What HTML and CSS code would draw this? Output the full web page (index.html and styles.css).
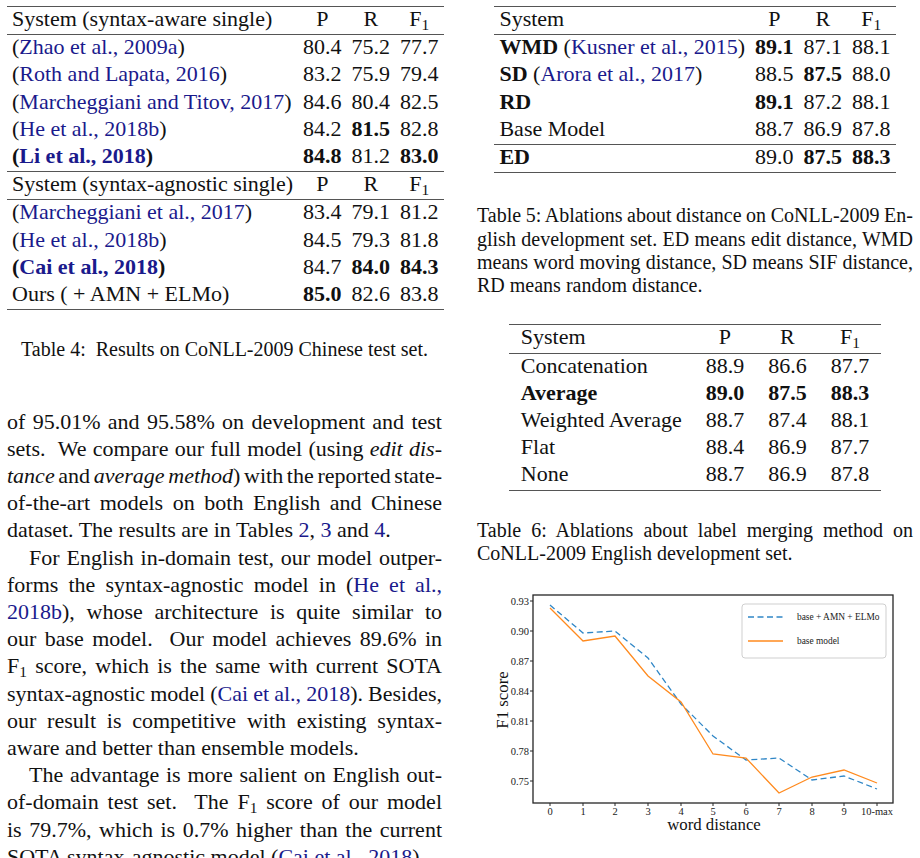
FILE: index.html
```html
<!DOCTYPE html>
<html lang="en">
<head>
  <meta charset="UTF-8">
  <title>Ablations and results</title>
  <link rel="stylesheet" href="styles.css">
</head>
<body>
  <div class="page">

    <!-- Left column -->
    <div class="col">
      <table class="tbl t4">
        <tr class="hd">
          <td class="name">System (syntax-aware single)</td>
          <td>P</td><td>R</td><td>F<sub>1</sub></td>
        </tr>
        <tr><td class="name">(<span class="cite">Zhao et al., 2009a</span>)</td><td>80.4</td><td>75.2</td><td>77.7</td></tr>
        <tr><td class="name">(<span class="cite">Roth and Lapata, 2016</span>)</td><td>83.2</td><td>75.9</td><td>79.4</td></tr>
        <tr><td class="name">(<span class="cite">Marcheggiani and Titov, 2017</span>)</td><td>84.6</td><td>80.4</td><td>82.5</td></tr>
        <tr><td class="name">(<span class="cite">He et al., 2018b</span>)</td><td>84.2</td><td><b>81.5</b></td><td>82.8</td></tr>
        <tr class="last"><td class="name"><b>(<span class="cite">Li et al., 2018</span>)</b></td><td><b>84.8</b></td><td>81.2</td><td><b>83.0</b></td></tr>
        <tr class="hd">
          <td class="name">System (syntax-agnostic single)</td>
          <td>P</td><td>R</td><td>F<sub>1</sub></td>
        </tr>
        <tr><td class="name">(<span class="cite">Marcheggiani et al., 2017</span>)</td><td>83.4</td><td>79.1</td><td>81.2</td></tr>
        <tr><td class="name">(<span class="cite">He et al., 2018b</span>)</td><td>84.5</td><td>79.3</td><td>81.8</td></tr>
        <tr><td class="name"><b>(<span class="cite">Cai et al., 2018</span>)</b></td><td>84.7</td><td><b>84.0</b></td><td><b>84.3</b></td></tr>
        <tr><td class="name">Ours ( + AMN + ELMo)</td><td><b>85.0</b></td><td>82.6</td><td>83.8</td></tr>
      </table>
      <p class="caption c4">Table 4:&nbsp; Results on CoNLL-2009 Chinese test set.</p>

      <div class="body">
        <span class="ln">of 95.01% and 95.58% on development and test</span>
        <span class="ln">sets.&nbsp; We compare our full model (using <i>edit dis-</i></span>
        <span class="ln"><i>tance</i> and <i>average method</i>) with the reported state-</span>
        <span class="ln">of-the-art models on both English and Chinese</span>
        <span class="ln end">dataset. The results are in Tables <span class="cite">2</span>, <span class="cite">3</span> and <span class="cite">4</span>.</span>
        <span class="ln ind">For English in-domain test, our model outper-</span>
        <span class="ln">forms the syntax-agnostic model in (<span class="cite">He et al.,</span></span>
        <span class="ln"><span class="cite">2018b</span>), whose architecture is quite similar to</span>
        <span class="ln">our base model.&nbsp; Our model achieves 89.6% in</span>
        <span class="ln">F<sub>1</sub> score, which is the same with current SOTA</span>
        <span class="ln">syntax-agnostic model (<span class="cite">Cai et al., 2018</span>). Besides,</span>
        <span class="ln">our result is competitive with existing syntax-</span>
        <span class="ln end">aware and better than ensemble models.</span>
        <span class="ln ind">The advantage is more salient on English out-</span>
        <span class="ln">of-domain test set.&nbsp; The F<sub>1</sub> score of our model</span>
        <span class="ln">is 79.7%, which is 0.7% higher than the current</span>
        <span class="ln end">SOTA syntax-agnostic model (<span class="cite">Cai et al., 2018</span>).</span>
      </div>
    </div>

    <!-- Right column -->
    <div class="col">
      <table class="tbl t5">
        <tr class="hd"><td class="name">System</td><td>P</td><td>R</td><td>F<sub>1</sub></td></tr>
        <tr><td class="name"><b>WMD</b> (<span class="cite">Kusner et al., 2015</span>)</td><td><b>89.1</b></td><td>87.1</td><td>88.1</td></tr>
        <tr><td class="name"><b>SD</b> (<span class="cite">Arora et al., 2017</span>)</td><td>88.5</td><td><b>87.5</b></td><td>88.0</td></tr>
        <tr><td class="name"><b>RD</b></td><td><b>89.1</b></td><td>87.2</td><td>88.1</td></tr>
        <tr class="last"><td class="name">Base Model</td><td>88.7</td><td>86.9</td><td>87.8</td></tr>
        <tr><td class="name"><b>ED</b></td><td>89.0</td><td><b>87.5</b></td><td><b>88.3</b></td></tr>
      </table>
      <p class="caption c5">
        <span class="ln">Table 5: Ablations about distance on CoNLL-2009 En-</span>
        <span class="ln">glish development set. ED means edit distance, WMD</span>
        <span class="ln">means word moving distance, SD means SIF distance,</span>
        <span class="ln end">RD means random distance.</span>
      </p>

      <table class="tbl t6">
        <tr class="hd"><td class="name">System</td><td>P</td><td>R</td><td>F<sub>1</sub></td></tr>
        <tr><td class="name">Concatenation</td><td>88.9</td><td>86.6</td><td>87.7</td></tr>
        <tr class="strong"><td class="name">Average</td><td>89.0</td><td>87.5</td><td>88.3</td></tr>
        <tr><td class="name">Weighted Average</td><td>88.7</td><td>87.4</td><td>88.1</td></tr>
        <tr><td class="name">Flat</td><td>88.4</td><td>86.9</td><td>87.7</td></tr>
        <tr><td class="name">None</td><td>88.7</td><td>86.9</td><td>87.8</td></tr>
      </table>
      <p class="caption c6">
        <span class="ln">Table 6: Ablations about label merging method on</span>
        <span class="ln end">CoNLL-2009 English development set.</span>
      </p>

      <!-- F1 by word distance -->
      <svg class="chart" width="436" height="250" viewBox="477 590 436 250">
        <g class="ticks">
          <line x1="530" y1="602" x2="533" y2="602"/><line x1="530" y1="632" x2="533" y2="632"/>
          <line x1="530" y1="662" x2="533" y2="662"/><line x1="530" y1="692" x2="533" y2="692"/>
          <line x1="530" y1="722" x2="533" y2="722"/><line x1="530" y1="752" x2="533" y2="752"/>
          <line x1="530" y1="782" x2="533" y2="782"/>
          <line x1="550" y1="804" x2="550" y2="807"/><line x1="583" y1="804" x2="583" y2="807"/>
          <line x1="615" y1="804" x2="615" y2="807"/><line x1="648" y1="804" x2="648" y2="807"/>
          <line x1="681" y1="804" x2="681" y2="807"/><line x1="713" y1="804" x2="713" y2="807"/>
          <line x1="746" y1="804" x2="746" y2="807"/><line x1="779" y1="804" x2="779" y2="807"/>
          <line x1="812" y1="804" x2="812" y2="807"/><line x1="844" y1="804" x2="844" y2="807"/>
          <line x1="877" y1="804" x2="877" y2="807"/>
        </g>
        <g class="tick-label" text-anchor="end">
          <text x="529" y="606">0.93</text><text x="529" y="636">0.90</text>
          <text x="529" y="666">0.87</text><text x="529" y="696">0.84</text>
          <text x="529" y="726">0.81</text><text x="529" y="756">0.78</text>
          <text x="529" y="786">0.75</text>
        </g>
        <g class="tick-label" text-anchor="middle">
          <text x="550" y="816">0</text><text x="583" y="816">1</text><text x="615" y="816">2</text>
          <text x="648" y="816">3</text><text x="681" y="816">4</text><text x="713" y="816">5</text>
          <text x="746" y="816">6</text><text x="779" y="816">7</text><text x="812" y="816">8</text>
          <text x="844" y="816">9</text><text x="877" y="816">10-max</text>
        </g>
        <text class="axis-label" x="714" y="831" text-anchor="middle">word distance</text>
        <text class="axis-label" transform="translate(508 701) rotate(-90)" text-anchor="middle">F1 score</text>

        <polyline class="s-blue" points="550,606 583,634 615,632 648,659 681,705 713,737 746,761 779,759 812,781 844,777 877,790"/>
        <polyline class="s-orange" points="550,609 583,642 615,637 648,677 681,703 713,755 746,759 779,794 812,778 844,771 877,784"/>

        <rect class="frame" x="533" y="596" width="360" height="208"/>

        <rect class="legend" x="742" y="605" width="144" height="54" rx="3"/>
        <line class="s-blue" x1="748" y1="618" x2="783" y2="618"/>
        <line class="s-orange" x1="748" y1="642" x2="783" y2="642"/>
        <text class="legend-text" x="797" y="621">base + AMN + ELMo</text>
        <text class="legend-text" x="797" y="645">base model</text>
      </svg>
    </div>

  </div>
</body>
</html>
```

FILE: styles.css
```css
/* Page setup */
html, body {
  margin: 0;
  padding: 0;
  background-color: #fff;
  color: #111;
  font-family: "Liberation Serif", "Times New Roman", serif;
  overflow: hidden;
  height: 858px;
}
.page {
  display: grid;
  grid-template-columns: 435px 436px;
  column-gap: 35px;
  padding-left: 7px;
}
.col {
  display: flex;
  flex-direction: column;
}

.cite {
  color: #1a1a8c;
}
sub {
  font-size: 0.7em;
  vertical-align: -0.25em;
  line-height: 0;
}

/* Tables */
.tbl {
  border-collapse: separate;
  border-spacing: 0;
  border-top: 1px solid #555;
  border-bottom: 1px solid #555;
  margin: 6px auto 0;
  font-size: 22px;
}
.tbl td {
  padding: 0 5px 4px;
  line-height: 23.2px;
  text-align: center;
  white-space: nowrap;
}
.tbl td.name {
  text-align: left;
}
.tbl tr.hd td,
.tbl tr.last td {
  border-bottom: 1px solid #555;
}
.tbl tr.strong td {
  font-weight: bold;
}
.t6 {
  margin-top: 27px;
}
.t6 td {
  padding: 0 12px 4px;
}

/* Captions */
.caption {
  font-size: 20px;
  line-height: 23.3px;
  margin: 0;
}
.c4 {
  text-align: center;
  margin-top: 28px;
}
.c5 {
  margin-top: 31px;
}
.c6 {
  margin-top: 28px;
}

/* Body text, one span per typeset line */
.body {
  margin-top: 46px;
  font-size: 22px;
  line-height: 27.2px;
}
.ln {
  display: block;
  text-align: justify;
  text-align-last: justify;
  word-spacing: -4px;
}
.ln.end {
  text-align-last: left;
  word-spacing: 0;
}
.ln.ind {
  text-indent: 22px;
}

/* Chart */
.chart {
  display: block;
  margin-top: 24px;
  font-family: "Liberation Serif", "Times New Roman", serif;
}
.frame {
  fill: none;
  stroke: #262626;
  stroke-width: 1.3;
}
.ticks line {
  stroke: #262626;
  stroke-width: 1;
}
.tick-label {
  font-size: 10.5px;
  fill: #222;
}
.axis-label {
  font-size: 16.8px;
  fill: #111;
}
.s-blue {
  fill: none;
  stroke: #2f86c6;
  stroke-width: 1.3;
  stroke-dasharray: 6 3.5;
}
.s-orange {
  fill: none;
  stroke: #ff8a1e;
  stroke-width: 1.3;
}
.legend {
  fill: #fff;
  stroke: #cfcfcf;
  stroke-width: 1;
}
.legend-text {
  font-size: 9.4px;
  fill: #222;
}
```
